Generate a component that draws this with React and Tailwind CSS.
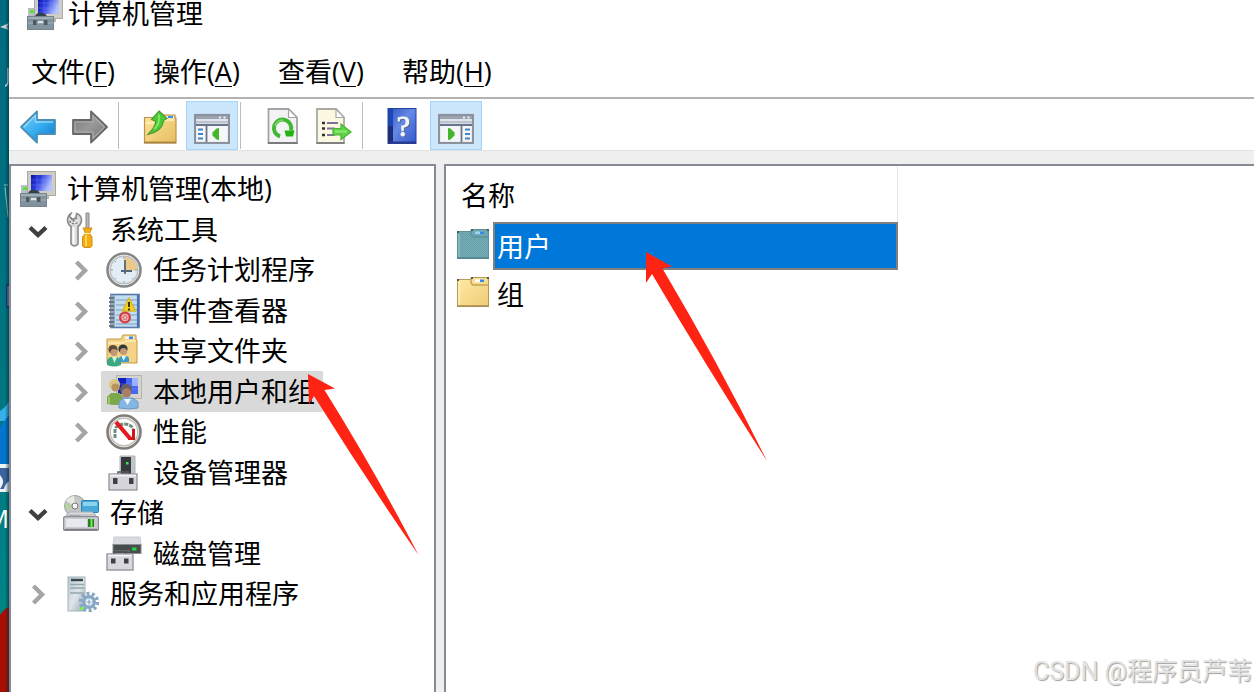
import React from "react";

function Svg({ children, className = "h-9 w-9" }) {
  return (
    <svg viewBox="0 0 36 36" className={`${className} shrink-0`} aria-hidden="true">
      {children}
    </svg>
  );
}

/* ---------- toolbar icons ---------- */

function BackIcon() {
  return (
    <Svg>
      <defs>
        <linearGradient id="back" x1="0" y1="0" x2="1" y2="1">
          <stop offset="0" stopColor="#7fd0f8" />
          <stop offset="0.5" stopColor="#38aef0" />
          <stop offset="1" stopColor="#0a78c8" />
        </linearGradient>
      </defs>
      <path d="M1 19 17 3.500V12h18v14H17v8.500Z" fill="url(#back)" stroke="#4a8fba" strokeWidth="1.800" strokeLinejoin="round" />
      <path d="M4 19 15.500 7.500V14H33" fill="none" stroke="#b4e6ff" strokeWidth="1.3" opacity=".7" />
    </Svg>
  );
}

function ForwardIcon() {
  return (
    <Svg>
      <defs>
        <linearGradient id="fwd" x1="0" y1="0" x2="1" y2="1">
          <stop offset="0" stopColor="#777" />
          <stop offset="0.5" stopColor="#999" />
          <stop offset="1" stopColor="#6c6c6c" />
        </linearGradient>
      </defs>
      <path d="M35 19 19 3.500V12H1v14h18v8.500Z" fill="url(#fwd)" stroke="#686868" strokeWidth="1.800" strokeLinejoin="round" />
      <path d="M3 14h18V7.500L32.500 19 21 30.500V24H3Z" fill="none" stroke="#bcbcbc" strokeWidth="1.100" opacity=".7" />
    </Svg>
  );
}

function FolderUpIcon() {
  return (
    <Svg>
      <defs>
        <linearGradient id="fup" x1="0" y1="0" x2="1" y2="1">
          <stop offset="0" stopColor="#ffe59a" />
          <stop offset="1" stopColor="#e6bc60" />
        </linearGradient>
      </defs>
      <path d="M2.500 9.500h16L21 7h12v3h1v25H2.500Z" fill="url(#fup)" stroke="#b8964c" strokeWidth="1.200" />
      <path d="M23 8h9v2.500h-9Z" fill="#f6f6f6" />
      <path d="M26 8h5v2h-5Z" fill="#3b8ee8" />
      <path d="M4 15h14l4-3h10" fill="none" stroke="#fff2c4" strokeWidth="1.300" />
      <path d="M2 34.500h32" stroke="#a88440" strokeWidth="1.800" />
      <path d="M17 3 25 10.500 21.500 12.500C21 20 14 25 6 26.500 10 22.500 14 18 13.500 13L9.500 11.500Z" fill="#4ccb38" stroke="#4c9a34" strokeWidth="1.200" />
      <path d="M17 6.500v5c0 4-2 7-5 9.500" fill="none" stroke="#84e862" strokeWidth="1.800" />
    </Svg>
  );
}

function PaneIcon({ flip = false }) {
  return (
    <Svg>
      <rect x="1" y="7" width="34" height="28" fill="#f4f6f8" stroke="#8a929e" strokeWidth="2.200" />
      <rect x="2" y="8" width="32" height="3" fill="#9aa3b0" />
      <path d="M25 9.500h2M29.500 9.500h2" stroke="#eef" strokeWidth="2" />
      <rect x="2" y="11" width="32" height="2" fill="#dfe4ea" />
      <rect x="2" y="13" width="32" height="2.500" fill="#bcc4d0" />
      <path d="M2 17h32" stroke="#68758a" strokeWidth="2" />
      {flip ? (
        <>
          <path d="M23.500 17v17" stroke="#68758a" strokeWidth="1.800" />
          <path d="M27 21.500h5M27 26h5M27 30.500h5" stroke="#4285c6" strokeWidth="1.800" />
          <path d="M10 20v12l2.500-.5 4-4v-3l-4-4Z" fill="#46b52c" />
        </>
      ) : (
        <>
          <path d="M12.500 17v17" stroke="#68758a" strokeWidth="1.800" />
          <path d="M4 21.500h5M4 26h5M4 30.500h5" stroke="#4285c6" strokeWidth="1.800" />
          <path d="M25 20v12l-2.500-.5-4-4v-3l4-4Z" fill="#46b52c" />
        </>
      )}
    </Svg>
  );
}

function RefreshIcon() {
  return (
    <Svg>
      <path d="M4.500 1h20L33 9.500V35H4.500Z" fill="#f3f3f5" stroke="#a2a4a8" strokeWidth="1.800" />
      <path d="M24.500 1v8.500H33Z" fill="#fff" stroke="#a2a4a8" strokeWidth="1.200" />
      <path d="M4 35h29.500" stroke="#777" strokeWidth="1.800" />
      <path d="M16 28.500a8.700 8.700 0 1 1 11-6" fill="none" stroke="#43b638" strokeWidth="4" />
      <path d="M11 18a8 8 0 0 1 8-6" fill="none" stroke="#84dc6c" strokeWidth="1.500" />
      <path d="M20.500 22.500h10l-1.500 6H22Z" fill="#22b414" />
    </Svg>
  );
}

function ExportIcon() {
  return (
    <Svg>
      <path d="M1 1h19l8 8.500V35H1Z" fill="#fdf8e2" stroke="#a9a9a4" strokeWidth="1.800" />
      <path d="M20 1v8.500h8Z" fill="#fff" stroke="#a9a9a4" strokeWidth="1.200" />
      <path d="M.5 35h28" stroke="#7d7d7d" strokeWidth="1.800" />
      <path d="M6 15h3M6 20.500h3M6 27h3" stroke="#333" strokeWidth="2.400" />
      <path d="M11 15h11M11 20.500h8M11 27h8" stroke="#77749a" strokeWidth="1.800" />
      <path d="M17 20.500h8V16L35 24l-10 7.500v-4.500h-8Z" fill="#5fd444" stroke="#4bb236" strokeWidth="1.200" />
      <path d="M19 23.500h12" stroke="#8aec70" strokeWidth="2" />
    </Svg>
  );
}

function HelpIcon() {
  return (
    <Svg>
      <defs>
        <linearGradient id="help" x1="0" y1="0" x2="1" y2="1">
          <stop offset="0" stopColor="#2b50c4" />
          <stop offset="0.450" stopColor="#6589e4" />
          <stop offset="1" stopColor="#3058cc" />
        </linearGradient>
      </defs>
      <rect x="2" y=".5" width="28" height="35" fill="url(#help)" stroke="#2542a0" />
      <rect x="2" y="1" width="5" height="34" fill="#1c46b4" />
      <rect x="2" y="18" width="5" height="17" fill="#1f2c78" />
      <path d="M2 34.500h28" stroke="#28388c" strokeWidth="2" />
      <text
        x="17.500"
        y="28"
        textAnchor="middle"
        className="font-['Liberation_Serif',serif] text-[30px] leading-none [filter:drop-shadow(1px_1px_0_#5b6690)]"
        stroke="#f4f6fb"
        strokeWidth="1"
        fill="#f4f6fb"
      >
        ?
      </text>
    </Svg>
  );
}

/* ---------- tree icons ---------- */

function ComputerIcon({ className }) {
  return (
    <Svg className={className}>
      <defs>
        <linearGradient id="screen" x1="0" y1="0" x2="1" y2="0.400">
          <stop offset="0" stopColor="#0a12a4" />
          <stop offset="0.450" stopColor="#2c3ee0" />
          <stop offset="1" stopColor="#b4c4ff" />
        </linearGradient>
      </defs>
      <rect x="1" y="14" width="8" height="9" fill="#b9bfc2" />
      <rect x="3" y="16" width="4" height="3" fill="#54e53c" />
      <path d="M14 24h15v4H14Z" fill="#b9b9b4" />
      <rect x="7.500" y=".5" width="28" height="24" fill="#cfcdc4" stroke="#a9aaa6" />
      <rect x="11" y="4" width="21" height="16" fill="url(#screen)" />
      <path d="M11 9h21M11 14h21M17 4v16M23 4v16M28 4v16" stroke="#8fa0ff" strokeWidth=".3" />
      <path d="M8 23c0-5 11-6 12 0Z" fill="#33414c" />
      <rect x=".5" y="22.500" width="26" height="13" fill="#82939d" stroke="#74848d" />
      <path d="M1 24h25" stroke="#a9b8bf" strokeWidth="1.500" />
      <path d="M1 29h25" stroke="#a6b5bc" />
      <rect x="6" y="26" width="3.500" height="5" fill="#4c5a62" />
      <rect x="17" y="26" width="3.500" height="5" fill="#4c5a62" />
      <path d="M11 28h5" stroke="#dce4e6" strokeWidth="2" />
    </Svg>
  );
}

function ToolsIcon() {
  return (
    <Svg>
      <path
        d="M8 1.500 6.500 4.500 10 7.500 13 5.500 13.500 1.500Q18 3 18.500 7.500 18.500 12 15 14.500V32q-3.500 4-7 0V14.500Q4.500 12 4.500 8 5 3.500 8 1.500Z"
        fill="#dcdcdc"
        stroke="#8a8a8a"
        strokeWidth="1.600"
      />
      <path d="M6.500 9q4 5 9 1M8 6l2 3 4-3" stroke="#777" strokeWidth="1.300" strokeDasharray="2 1.500" fill="none" />
      <path d="M10.500 15v17" stroke="#fff" strokeWidth="2" />
      <path d="M23 1h3v16h-3Z" fill="#b7b7b7" stroke="#8a8a8a" />
      <path d="M20 16h9l-2 4v2l2 3v9l-2 1.500h-6L19.500 34v-9l2.500-3v-2Z" fill="#f5ac12" stroke="#cf8d14" />
      <path d="M23 23v11" stroke="#ffdb68" strokeWidth="1.800" />
      <path d="M20 21.500h8" stroke="#fff2c0" />
    </Svg>
  );
}

function ClockIcon() {
  return (
    <Svg>
      <circle cx="18" cy="18" r="16.500" fill="#f5f5f3" stroke="#858789" strokeWidth="2.600" />
      <circle cx="18" cy="18" r="13.800" fill="#e3edf5" stroke="#bcbfc2" strokeWidth="1.500" />
      <path d="M18.500 18V5A13 13 0 0 1 31 18.500Z" fill="#edc988" />
      <path d="M18 5v2M18 29v2M5 18h2M29 18h2M9 9l1 1M9 27l1-1M27 27l-1-1" stroke="#8798a6" />
      <path d="M19 8v14M15 19h11" stroke="#52697c" strokeWidth="1.800" />
    </Svg>
  );
}

function EventIcon() {
  return (
    <Svg>
      <rect x="5" y="1.500" width="28" height="33" fill="#c2dcf0" stroke="#5a78a8" strokeWidth="1.600" />
      <rect x="5" y="2" width="4" height="32" fill="#92a9c2" />
      <path d="M10 7h21M10 12h21M10 17h21M10 22h21M10 27h21M10 31h21" stroke="#7f9cbe" strokeWidth="1.200" />
      <path d="M32 2v32" stroke="#4a70b4" strokeWidth="2.200" />
      <path d="M3 5h5M3 9h5M3 13h5M3 17h5M3 21h5M3 25h5M3 29h5M3 33h5" stroke="#6a727c" strokeWidth="1.800" />
      <path d="M23 5 29.500 18h-13Z" fill="#f7cf1c" stroke="#d6b828" strokeWidth="1.500" strokeLinejoin="round" />
      <path d="M23 9v5M23 15.500v2" stroke="#3d3410" strokeWidth="2" />
      <circle cx="19" cy="24.500" r="6" fill="#d64044" />
      <circle cx="19" cy="24.500" r="3" fill="none" stroke="#f0b4b4" strokeWidth="1.300" />
      <path d="m17.500 23 3 3m0-3-3 3" stroke="#fff" />
    </Svg>
  );
}

function SharedIcon() {
  return (
    <Svg>
      <path d="M1 6h14l2-4h13v5h1v23H1Z" fill="#f5d286" stroke="#c19b4a" />
      <path d="M2 10h15l3-2h10" fill="none" stroke="#fff0b9" strokeWidth="1.500" />
      <path d="M19 3.500h9V6h-9Z" fill="#f9f9f9" />
      <path d="M23 3.500h4V6h-4Z" fill="#368ae2" />
      <circle cx="7" cy="16.500" r="4.600" fill="#5a4a38" />
      <circle cx="8" cy="19.500" r="3.500" fill="#c09a74" />
      <path d="M1 32v-5l3-3h7l4 3v5q-7 3-14 0Z" fill="#3aa982" />
      <path d="m6 24 2.500 6 2.500-6" fill="#d8f2e6" />
      <circle cx="17" cy="16" r="4.600" fill="#33363a" />
      <circle cx="17.500" cy="18.500" r="3.500" fill="#c49a74" />
      <path d="M13 29v-4l2-2h6l2 2v4Z" fill="#3a9cc8" />
      <path d="m15.500 23 2 5 2.500-5" fill="#e8f5ff" />
    </Svg>
  );
}

function UsersIcon() {
  return (
    <Svg>
      <rect x="10.500" y="1.500" width="25" height="23" fill="#d5d4cd" stroke="#b4b4b0" />
      <rect x="12" y="4" width="20" height="16" fill="#1020c0" />
      <path d="M20 4h12v16H20Z" fill="#4767ef" />
      <path d="M26 4h6v8h-6Z" fill="#9eb4ff" />
      <path d="M12 10h20M12 15h20" stroke="#8197fa" strokeWidth=".4" />
      <circle cx="8.500" cy="10.500" r="5.500" fill="#d9c684" />
      <circle cx="9.500" cy="13.500" r="4" fill="#b8935f" />
      <path d="M1 30v-7l4-4h9l4 5v6q-8 2-17 0Z" fill="#7aa84a" />
      <path d="M3 23v7" stroke="#a6c66e" strokeWidth="2" />
      <circle cx="20" cy="15.500" r="5.800" fill="#6a5f60" />
      <circle cx="20.500" cy="19" r="4.700" fill="#a97f66" />
      <path d="M13 34v-6l4-4h10l5 4v6q-9 2-19 0Z" fill="#86b6e2" stroke="#6c98c4" />
      <path d="m18 25 3.500 6 3.500-6" fill="#edf6ff" />
    </Svg>
  );
}

function PerformanceIcon() {
  return (
    <Svg>
      <circle cx="18" cy="18" r="16.500" fill="#f4f2ee" stroke="#807c78" strokeWidth="2.600" />
      <circle cx="18" cy="18" r="13.800" fill="#fff" stroke="#c4beb8" strokeWidth="1.500" />
      <path d="M9 24V15c2-6 16-7 18 0" fill="none" stroke="#6c8c7c" strokeWidth="3" strokeDasharray="4 1" />
      <path d="M27.500 15v9.500H22" fill="none" stroke="#ce1719" strokeWidth="3" />
      <path d="m10 8 14.500 17" stroke="#e51920" strokeWidth="4.200" />
    </Svg>
  );
}

function DeviceIcon() {
  return (
    <Svg>
      <path d="M14 1h15v20H14Z" fill="#c2c4c9" stroke="#b0b2b8" />
      <rect x="15" y="2" width="10" height="17" fill="#35393b" />
      <rect x="20" y="7" width="2.500" height="2.500" fill="#3be54b" />
      <rect x="3" y="19" width="28" height="16" fill="#d6d5db" stroke="#94959b" strokeWidth="1.300" />
      <path d="M4 20.500h26" stroke="#f4f4f8" strokeWidth="1.600" />
      <path d="M12 18.500V17h10v1.500" fill="none" stroke="#585c60" strokeWidth="1.600" />
      <rect x="7" y="23" width="4.500" height="6" fill="#3c4148" />
      <rect x="23" y="23" width="4.500" height="6" fill="#3c4148" />
    </Svg>
  );
}

function StorageIcon() {
  return (
    <Svg>
      <circle cx="12" cy="11" r="10.500" fill="#c6c6c6" stroke="#a0a0a0" />
      <path d="m12 11-9-5a10 10 0 0 1 8-5Z" fill="#e6ece2" />
      <path d="m12 11-9 4a10 10 0 0 1-1-7Z" fill="#b0d4a2" />
      <circle cx="12" cy="11" r="3" fill="#f8f8f8" stroke="#777" />
      <rect x="18.500" y="5.500" width="17" height="12" rx="1" fill="#46a9d9" stroke="#2584b4" />
      <path d="M20 7h14v4H20Z" fill="#8bd2ee" />
      <path d="m3 20 4-3h22l4 3Z" fill="#dadbe0" stroke="#b0b1b6" />
      <rect x=".5" y="21.500" width="35" height="14" rx="2" fill="#cbcbd3" stroke="#8d8e96" strokeWidth="1.300" />
      <path d="M3 24h21v8H3Z" fill="#e8e8ef" />
      <rect x="25" y="24" width="6" height="8" fill="#2c7d2b" />
      <path d="M28.500 24v8" stroke="#72ef39" strokeWidth="2" />
      <path d="M2 34.500h32" stroke="#777a80" strokeWidth="1.500" />
    </Svg>
  );
}

function DiskIcon() {
  return (
    <Svg>
      <path d="M8 1h26l1 8H7Z" fill="#d8dce0" stroke="#c8ccd0" />
      <rect x="7" y="8.500" width="28" height="9" fill="#474c4f" stroke="#888c90" />
      <rect x="26" y="11.500" width="4.500" height="3" fill="#26d43b" />
      <path d="M9 15h15" stroke="#6a6a6a" strokeWidth="1.500" />
      <rect x="1" y="18" width="26" height="16" fill="#d9d8de" stroke="#94959c" strokeWidth="1.400" />
      <path d="M2 19.500h24" stroke="#f4f4f8" strokeWidth="1.600" />
      <path d="M8 17.500V16h12v1.500" fill="none" stroke="#4c5155" strokeWidth="1.500" />
      <rect x="5" y="22.500" width="4.500" height="5" fill="#3c4148" />
      <rect x="18" y="22.500" width="4.500" height="5" fill="#3c4148" />
    </Svg>
  );
}

function ServicesIcon() {
  return (
    <Svg>
      <defs>
        <linearGradient id="tower" x1="0" y1="0" x2="1" y2="1">
          <stop offset="0" stopColor="#b9c7cd" />
          <stop offset="0.500" stopColor="#dfe6e9" />
          <stop offset="1" stopColor="#98abb3" />
        </linearGradient>
      </defs>
      <rect x="5" y="1" width="17" height="34" fill="url(#tower)" stroke="#a4b2b9" />
      <path d="M8 4h12" stroke="#37484f" strokeWidth="2.500" />
      <path d="M7 8.500h14M7 12h14M7 17h14" stroke="#93a8b1" strokeWidth="1.300" />
      <rect x="17" y="31" width="4" height="3" fill="#82ed55" />
      <circle cx="26" cy="26" r="8.500" fill="none" stroke="#86a6c4" strokeWidth="3.500" strokeDasharray="2.900 2.440" />
      <circle cx="26" cy="26" r="5.500" fill="#b5cde1" stroke="#86a6c4" strokeWidth="3" />
      <circle cx="26" cy="26" r="3" fill="#f7fafc" />
      <path d="M26 23.500v5M23.500 26h5" stroke="#8aa2b8" strokeWidth="1.200" />
    </Svg>
  );
}

function FolderIcon({ selected = false }) {
  return (
    <svg viewBox="0 0 32 30" className="mb-1 h-[30px] w-8 shrink-0" aria-hidden="true">
      <defs>
        <linearGradient id="folder" x1="0" y1="0" x2="1" y2="1">
          <stop offset="0" stopColor="#ffeaa4" />
          <stop offset="1" stopColor="#efcc77" />
        </linearGradient>
        <pattern id="halftone" width="2" height="2" patternUnits="userSpaceOnUse">
          <rect width="2" height="2" fill="#7aabac" />
          <rect width="1" height="1" fill="#5f9fb6" />
          <rect x="1" y="1" width="1" height="1" fill="#6ca5b0" />
        </pattern>
      </defs>
      <path d="M.5 2.500h13L15 .5h16.500V29.500H.5Z" fill={selected ? "url(#halftone)" : "url(#folder)"} stroke={selected ? "#5a929c" : "#b69858"} />
      <path d="M14 1v5l2 2h15" fill="none" stroke={selected ? "#5a929c" : "#c5a25a"} strokeWidth="1.400" />
      <path d="M18 2.500h9v2.500h-9Z" fill={selected ? "#97d5f0" : "#fff"} />
      <path d="M23 2.500h4v2.500h-4Z" fill="#338be6" />
      <path d="M2 5v23" stroke={selected ? "#8abec0" : "#fff1bd"} strokeWidth="1.500" />
      <path d="M0 29h32" stroke={selected ? "#4f8492" : "#a88a4c"} strokeWidth="1.500" />
      <path d="M0 2h2v2H0ZM14 0h2v2h-2ZM30 0h2v2h-2Z" fill="#4f5a50" />
    </svg>
  );
}

function Chevron({ open }) {
  return (
    <svg viewBox="0 0 24 24" className="h-6 w-6" fill="none" strokeWidth="4.400" aria-hidden="true">
      {open ? (
        <path d="m4 9.500 8 7.500 8-7.500" stroke="#404040" />
      ) : (
        <path d="m7.500 4 8.500 8.500-8.500 8.500" stroke="#a5a5a5" />
      )}
    </svg>
  );
}

/* ---------- data ---------- */

const MENUS = [
  { label: "文件", key: "F" },
  { label: "操作", key: "A" },
  { label: "查看", key: "V" },
  { label: "帮助", key: "H" },
];

const TREE = [
  { label: "计算机管理(本地)", level: 0, Icon: ComputerIcon },
  { label: "系统工具", level: 1, Icon: ToolsIcon, open: true },
  { label: "任务计划程序", level: 2, Icon: ClockIcon, open: false },
  { label: "事件查看器", level: 2, Icon: EventIcon, open: false },
  { label: "共享文件夹", level: 2, Icon: SharedIcon, open: false },
  { label: "本地用户和组", level: 2, Icon: UsersIcon, open: false, selected: true },
  { label: "性能", level: 2, Icon: PerformanceIcon, open: false },
  { label: "设备管理器", level: 2, Icon: DeviceIcon },
  { label: "存储", level: 1, Icon: StorageIcon, open: true },
  { label: "磁盘管理", level: 2, Icon: DiskIcon },
  { label: "服务和应用程序", level: 1, Icon: ServicesIcon, open: false },
];

const INDENT = ["pl-1", "pl-[9px]", "pl-[52px]"];

/* ---------- parts ---------- */

function ToolButton({ label, active = false, children }) {
  return (
    <button
      type="button"
      aria-label={label}
      className={`grid w-[52px] shrink-0 place-items-center border pt-px ${
        active ? "border-[#a6d5fa] bg-[#cce6fc]" : "border-transparent"
      }`}
    >
      {children}
    </button>
  );
}

function Separator() {
  return <div className="mt-px mr-[15px] mb-px ml-0.5 w-px shrink-0 bg-[#bdbdbd]" />;
}

function TreeRow({ label, level, Icon, open, selected }) {
  return (
    <li
      role="treeitem"
      aria-level={level + 1}
      aria-expanded={open}
      aria-selected={Boolean(selected)}
      className={`flex items-stretch odd:h-10 even:h-[41px] ${INDENT[level]}`}
    >
      {level > 0 && (
        <div className="mr-0.5 grid w-9 shrink-0 place-items-center">
          {open !== undefined && (
            <button type="button" aria-label={open ? `折叠${label}` : `展开${label}`}>
              <Chevron open={open} />
            </button>
          )}
        </div>
      )}
      <button
        type="button"
        className={`flex items-center gap-[11px] pr-2 pl-[5px] whitespace-nowrap ${selected ? "bg-[#d9d9d9]" : ""}`}
      >
        <Icon />
        <span>{label}</span>
      </button>
    </li>
  );
}

function DesktopEdge() {
  return (
    <div className="relative w-[9px] shrink-0 overflow-hidden bg-[#007580]" aria-hidden="true">
      <svg width="9" height="692" viewBox="0 0 9 692" className="absolute top-0 left-0">
        <defs>
          <linearGradient id="desk" x1="0" y1="0" x2="0" y2="1">
            <stop offset="0" stopColor="#006c82" />
            <stop offset="0.500" stopColor="#007480" />
            <stop offset="1" stopColor="#008a88" />
          </linearGradient>
          <linearGradient id="edge" x1="0" y1="0" x2="1" y2="0">
            <stop offset="0" stopColor="#002c38" stopOpacity="0" />
            <stop offset="1" stopColor="#002c38" stopOpacity=".6" />
          </linearGradient>
        </defs>
        <rect width="9" height="692" fill="url(#desk)" />
        <path d="m0 27 9-4-2 4 2 3Z" fill="#c8d2d4" />
        <path d="M8 68v14q-1 4-3 4" fill="none" stroke="#dbe6e8" strokeWidth="1.500" />
        <path d="M4 185h4M5 187l3 30" stroke="#a8c6ca" fill="none" />
        <rect x="6" y="284" width="3" height="24" fill="#1c3488" />
        <rect x="7.500" y="286" width="1.500" height="20" fill="#8c98a8" />
        <path d="M0 411q6-4 9-10v20H0Z" fill="#35b0ea" />
        <path d="M0 427q5-7 9-12v49H0Z" fill="#0575d0" />
        <rect y="464" width="9" height="28" fill="#f2f5f8" />
        <path d="M0 468h9v13q-4 3-5 8H0q5-7 2-11l-2-3Z" fill="#3c629f" />
        <path d="M0 615q4-6 9-8v85H0Z" fill="#a80f04" />
        <rect x="5" width="4" height="692" fill="url(#edge)" />
        <text x="9" y="528" textAnchor="end" fontFamily="Open Sans, sans-serif" fontSize="25" fill="#fff">M</text>
      </svg>
    </div>
  );
}

function Annotations() {
  return (
    <svg
      width="480"
      height="320"
      viewBox="300 250 480 320"
      className="pointer-events-none absolute top-[250px] left-[300px]"
      aria-hidden="true"
      fill="#ff2313"
    >
      <path d="M308 374 335 388.500 324.500 390Q375 471 418.500 555 364 476 314 396L309 404.500Z" />
      <path d="M646 252 672 266.500 662.500 268.500Q719 364 767 461 708 369 652 274L646 283Z" />
    </svg>
  );
}

export default function App() {
  return (
    <div className="relative flex min-h-screen overflow-hidden bg-white font-['Open_Sans','Noto_Sans_CJK_SC',sans-serif] text-[27px] leading-9 text-black">
      <DesktopEdge />

      <div className="flex min-w-0 flex-1 flex-col">
        <header className="h-[46px] overflow-hidden pl-[18px]">
          <div className="flex h-7 items-center gap-[5px]">
            <ComputerIcon className="mb-1 h-9 w-9" />
            <h1 className="leading-7">计算机管理</h1>
          </div>
        </header>

        <nav aria-label="菜单" className="flex h-[53px] items-center border-b-2 border-[#b2b2b2] pl-[3px]">
          {MENUS.map(({ label, key }) => (
            <button type="button" key={key} className="px-[19px] whitespace-nowrap">
              {label}(
              <span className="underline decoration-1 underline-offset-4">{key}</span>)
            </button>
          ))}
        </nav>

        <div role="toolbar" aria-label="工具栏" className="flex h-[52px] border-b border-[#e2e2e2] pt-0.5 pl-[3px]">
          <ToolButton label="后退"><BackIcon /></ToolButton>
          <ToolButton label="前进"><ForwardIcon /></ToolButton>
          <Separator />
          <ToolButton label="向上一级"><FolderUpIcon /></ToolButton>
          <ToolButton label="显示/隐藏控制台树" active><PaneIcon /></ToolButton>
          <Separator />
          <ToolButton label="刷新"><RefreshIcon /></ToolButton>
          <ToolButton label="导出列表"><ExportIcon /></ToolButton>
          <Separator />
          <ToolButton label="帮助"><HelpIcon /></ToolButton>
          <ToolButton label="显示/隐藏操作窗格" active><PaneIcon flip /></ToolButton>
        </div>

        <main className="flex flex-1 gap-2 bg-[#efefef] pt-[13px]">
          <section className="w-[427px] shrink-0 border-2 border-b-0 border-[#868a94] bg-white pt-[3px]">
            <ul role="tree" aria-label="控制台树">
              {TREE.map((node) => (
                <TreeRow key={node.label} {...node} />
              ))}
            </ul>
          </section>

          <section className="min-w-0 flex-1 border-t-2 border-l-2 border-[#868a94] bg-white">
            <table className="w-[452px] border-collapse text-left">
              <thead>
                <tr className="h-14">
                  <th scope="col" className="border-r border-[#e5e5e5] p-0 pt-1 pl-[15px] font-normal">
                    名称
                  </th>
                </tr>
              </thead>
              <tbody>
                <tr>
                  <td className="p-0">
                    <div className="flex h-12 items-center gap-1 pl-[11px]">
                      <FolderIcon selected />
                      <span className="flex h-full flex-1 items-center border-2 border-[#80807f] bg-[#0078d9] pt-0.5 pl-0.5 text-white">
                        用户
                      </span>
                    </div>
                  </td>
                </tr>
                <tr>
                  <td className="p-0">
                    <div className="flex h-12 items-center gap-1 pl-[11px]">
                      <FolderIcon />
                      <span className="pt-0.5 pl-1">组</span>
                    </div>
                  </td>
                </tr>
              </tbody>
            </table>
          </section>
        </main>
      </div>

      <Annotations />
      <p className="absolute right-0.5 bottom-0.5 font-[Roboto,'Noto_Sans_CJK_SC',sans-serif] text-[25px] text-[#e2e2e2] [text-shadow:1px_1px_1px_#a0a0a0]">
        CSDN @程序员芦苇
      </p>
    </div>
  );
}
